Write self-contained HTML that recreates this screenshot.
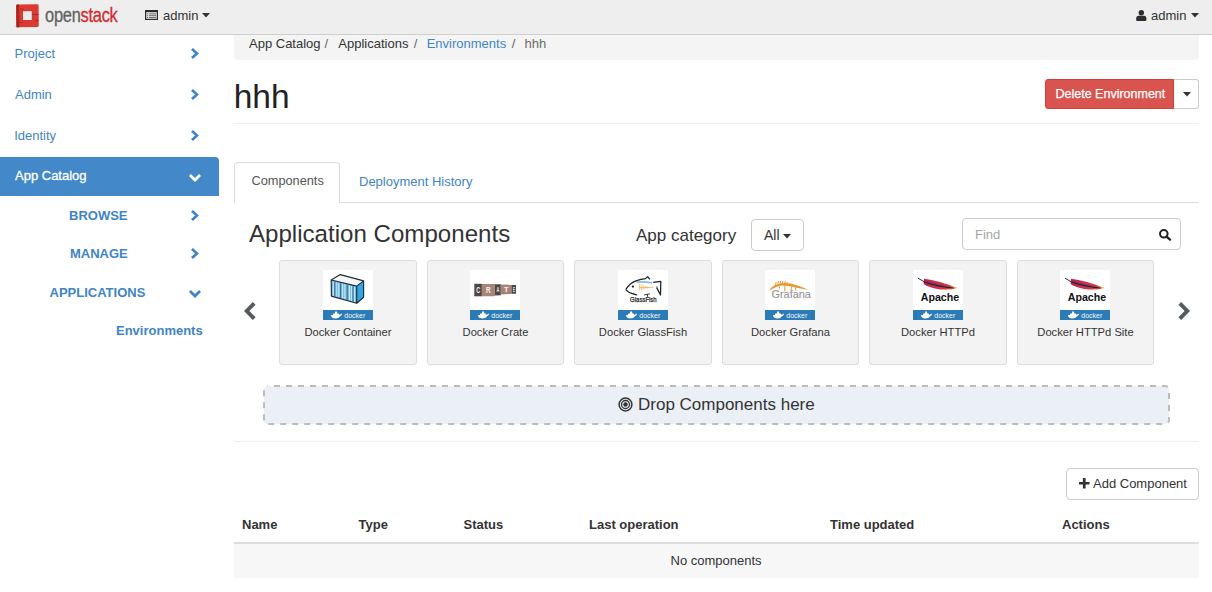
<!DOCTYPE html>
<html><head><meta charset="utf-8">
<style>
*{box-sizing:border-box;margin:0;padding:0}
html,body{width:1212px;height:592px;overflow:hidden;background:#fff;font-family:"Liberation Sans",sans-serif;color:#333;font-size:13px}
.a{position:absolute;white-space:nowrap;line-height:1}
#nav{position:absolute;left:0;top:0;width:1212px;height:35px;background:#eee;border-bottom:1px solid #cfcfcf}
.blue{color:#3f84c7}
.side{font-size:13px}
.b{font-weight:bold}
svg{position:absolute;overflow:visible}
</style></head><body>
<div id="nav"></div>
<!-- logo -->
<svg style="left:13px;top:3px" width="28" height="27" viewBox="0 0 28 27"><path d="M1.5 22.5 L4 25 L5 24 Z" fill="#9a9a9a" opacity="0.6"/><path d="M3.2 2.8 Q3.2 1.6 4.4 1.5 L24.6 1.2 Q25.6 1.3 25.6 2.4 L25.8 22.6 Q25.8 23.8 24.6 23.9 L4.6 24.3 Q3.4 24.3 3.4 23.2 Z" fill="#da3a31"/><path d="M3.2 2.8 Q3.2 1.6 4.4 1.5 L6 1.5 L6.4 24.3 L4.6 24.3 Q3.4 24.3 3.4 23.2 Z" fill="#a8251f"/><rect x="10" y="8.2" width="9.2" height="8.8" fill="#ececec"/><path d="M19.2 8.2 L19.2 17 M19.4 11.5 L25.6 11.5 M6.4 19.5 L10 19.5 M22 17.6 L25.6 17.6 M7 6 L11 6" stroke="#8f1f1a" stroke-width="0.8" opacity="0.8"/></svg>
<div class="a" style="left:45px;top:4px;font-size:21px;transform:scaleX(0.78);transform-origin:0 0;letter-spacing:-0.3px;-webkit-text-stroke:0.35px"><span style="color:#626262">open</span><span style="color:#d42a2f">stack</span></div>
<!-- project list icon -->
<svg style="left:145px;top:10px" width="13" height="10" viewBox="0 0 13 10"><rect x="0.6" y="0.6" width="11.8" height="8.8" fill="none" stroke="#2a2a2a" stroke-width="1.2"/><rect x="0" y="0" width="13" height="2.2" fill="#2a2a2a"/><rect x="1.8" y="3.4" width="1.4" height="1" fill="#666"/><rect x="1.8" y="5.2" width="1.4" height="1" fill="#666"/><rect x="1.8" y="7" width="1.4" height="1" fill="#666"/><rect x="4" y="3.4" width="7.2" height="1" fill="#666"/><rect x="4" y="5.2" width="7.2" height="1" fill="#666"/><rect x="4" y="7" width="7.2" height="1" fill="#666"/></svg>
<div class="a" style="left:163px;top:9px;font-size:13px;color:#333">admin</div>
<svg style="left:202px;top:13.4px" width="8" height="5" viewBox="0 0 8 5"><path d="M0 0 L8 0 L4 4.5 Z" fill="#333"/></svg>
<!-- user -->
<svg style="left:1136px;top:10px" width="11" height="11" viewBox="0 0 11 11"><circle cx="5.3" cy="2.7" r="2.7" fill="#2d2d2d"/><path d="M0.2 10 L0.2 8.4 Q0.2 5.8 2.6 5.8 L8 5.8 Q10.4 5.8 10.4 8.4 L10.4 10 Q10.4 11 9.4 11 L1.2 11 Q0.2 11 0.2 10 Z" fill="#2d2d2d"/></svg>
<div class="a" style="left:1151px;top:9px;font-size:13px;color:#333">admin</div>
<svg style="left:1191px;top:13.4px" width="8" height="5" viewBox="0 0 8 5"><path d="M0 0 L8 0 L4 4.5 Z" fill="#333"/></svg>

<!-- sidebar -->
<div class="a side blue" style="left:14.6px;top:47px">Project</div>
<div class="a side blue" style="left:15px;top:88px">Admin</div>
<div class="a side blue" style="left:14.2px;top:129px">Identity</div>
<div style="position:absolute;left:0;top:157px;width:219px;height:39px;background:#4388c9;border-top-right-radius:4px"></div>
<div class="a side" style="left:15px;top:169px;color:#fff;-webkit-text-stroke:0.3px #fff">App Catalog</div>
<div class="a side b blue" style="left:69px;top:208.6px">BROWSE</div>
<div class="a side b blue" style="left:70px;top:246.8px">MANAGE</div>
<div class="a side b blue" style="left:49.5px;top:286px">APPLICATIONS</div>
<div class="a side b blue" style="left:116px;top:324px">Environments</div>
<!-- chevrons -->
<svg style="left:191px;top:48px" width="8" height="11" viewBox="0 0 8 11"><path d="M1.9 0 L7.9 5.5 L1.9 11 L0 9.1 L4.1 5.5 L0 1.9 Z" fill="#3f84c7"/></svg>
<svg style="left:191px;top:89px" width="8" height="11" viewBox="0 0 8 11"><path d="M1.9 0 L7.9 5.5 L1.9 11 L0 9.1 L4.1 5.5 L0 1.9 Z" fill="#3f84c7"/></svg>
<svg style="left:191px;top:130px" width="8" height="11" viewBox="0 0 8 11"><path d="M1.9 0 L7.9 5.5 L1.9 11 L0 9.1 L4.1 5.5 L0 1.9 Z" fill="#3f84c7"/></svg>
<svg style="left:188.5px;top:173.5px" width="12" height="8" viewBox="0 0 12 8"><path d="M0 1.9 L1.9 0 L6 4.1 L10.1 0 L12 1.9 L6 7.9 Z" fill="#fff"/></svg>
<svg style="left:191px;top:210px" width="8" height="11" viewBox="0 0 8 11"><path d="M1.9 0 L7.9 5.5 L1.9 11 L0 9.1 L4.1 5.5 L0 1.9 Z" fill="#3f84c7"/></svg>
<svg style="left:191px;top:248px" width="8" height="11" viewBox="0 0 8 11"><path d="M1.9 0 L7.9 5.5 L1.9 11 L0 9.1 L4.1 5.5 L0 1.9 Z" fill="#3f84c7"/></svg>
<svg style="left:189px;top:290px" width="12" height="8" viewBox="0 0 12 8"><path d="M0 1.9 L1.9 0 L6 4.1 L10.1 0 L12 1.9 L6 7.9 Z" fill="#3f84c7"/></svg>

<!-- breadcrumb -->
<div style="position:absolute;left:234px;top:35px;width:965px;height:25px;background:#f4f4f4;border-radius:0 0 4px 4px"></div>
<div class="a" style="left:249px;top:36.6px">App Catalog</div><div class="a" style="left:324.5px;top:36.6px;color:#666">/</div><div class="a" style="left:338.3px;top:36.6px">Applications</div><div class="a" style="left:413.8px;top:36.6px;color:#666">/</div><div class="a blue" style="left:426.7px;top:36.6px">Environments</div><div class="a" style="left:511.7px;top:36.6px;color:#666">/</div><div class="a" style="left:524.5px;top:36.6px;color:#6a6a6a">hhh</div>

<!-- title -->
<div class="a" style="left:233.7px;top:79.6px;font-size:33.5px;color:#222">hhh</div>
<div style="position:absolute;left:234px;top:123px;width:965px;height:1px;background:#eee"></div>

<!-- delete button -->
<div style="position:absolute;left:1045px;top:79px;width:129px;height:30px;background:#d9534f;border:1px solid #d43f3a;border-radius:3px 0 0 3px"></div>
<div class="a" style="left:1055.5px;top:88px;font-size:12.5px;color:#fff;-webkit-text-stroke:0.25px #fff">Delete Environment</div>
<div style="position:absolute;left:1174px;top:79px;width:25px;height:30px;background:#fff;border:1px solid #ccc;border-left:none;border-radius:0 3px 3px 0"></div>
<svg style="left:1183px;top:92px" width="8" height="5" viewBox="0 0 8 5"><path d="M0 0 L8 0 L4 4.5 Z" fill="#333"/></svg>

<!-- tabs -->
<div style="position:absolute;left:234px;top:202px;width:965px;height:1px;background:#ddd"></div>
<div style="position:absolute;left:234px;top:162px;width:106px;height:41px;background:#fff;border:1px solid #ddd;border-bottom:none;border-radius:4px 4px 0 0"></div>
<div class="a" style="left:251.5px;top:175.2px;font-size:12.75px;color:#555">Components</div>
<div class="a blue" style="left:359px;top:175px;font-size:13px">Deployment History</div>

<!-- app components header -->
<div class="a" style="left:249px;top:222px;font-size:24.1px;color:#333">Application Components</div>
<div class="a" style="left:636px;top:227px;font-size:17px;color:#333">App category</div>
<div style="position:absolute;left:751px;top:219px;width:53px;height:32px;border:1px solid #ccc;border-radius:4px;background:#fff"></div>
<div class="a" style="left:764px;top:227.5px;font-size:14px;color:#333">All</div>
<svg style="left:783px;top:234px" width="8" height="5" viewBox="0 0 8 5"><path d="M0 0 L8 0 L4 4.5 Z" fill="#333"/></svg>
<div style="position:absolute;left:962px;top:218px;width:219px;height:32px;border:1px solid #ccc;border-radius:4px;background:#fff"></div>
<div class="a" style="left:975px;top:228px;font-size:13px;color:#a4a4a4">Find</div>
<svg style="left:1159px;top:229px" width="12" height="11" viewBox="0 0 12 11"><circle cx="4.8" cy="4.8" r="3.8" fill="none" stroke="#222" stroke-width="2"/><path d="M7.6 7.6 L11 10.6" stroke="#222" stroke-width="2.4" stroke-linecap="round"/></svg>

<!-- carousel -->
<svg style="left:244px;top:302px" width="12" height="18" viewBox="0 0 12 18"><path d="M8.8 0 L11.6 2.8 L5.4 9 L11.6 15.2 L8.8 18 L0 9 Z" fill="#565b60"/></svg>
<svg style="left:1178px;top:302px" width="12" height="18" viewBox="0 0 12 18"><path d="M3.2 0 L0.4 2.8 L6.6 9 L0.4 15.2 L3.2 18 L12 9 Z" fill="#565b60"/></svg>

<div id="cards"></div>
<div style="position:absolute;left:279px;top:260px;width:138px;height:105px;background:#f3f3f3;border:1px solid #ddd;border-radius:3px"></div>
<svg style="left:323px;top:270px" width="50" height="50" viewBox="0 0 50 50"><rect width="50" height="50" fill="#fff"/><path d="M8.2 10 L17.3 4.6 L40.6 10.9 L33.7 16.1 Z" fill="#f6f7f8"/><path d="M8.2 10 L33.7 16.1 L33.7 33.3 L8.4 26.1 Z" fill="#74bde3"/><path d="M10.3 11.50 L10.3 25.89" stroke="#d6effa" stroke-width="0.9"/><path d="M13.2 12.20 L13.2 26.71" stroke="#d6effa" stroke-width="0.9"/><path d="M15.8 12.82 L15.8 27.45" stroke="#d6effa" stroke-width="0.9"/><path d="M19.6 13.73 L19.6 28.52" stroke="#d6effa" stroke-width="0.9"/><path d="M21.9 14.28 L21.9 29.17" stroke="#d6effa" stroke-width="0.9"/><path d="M26.5 15.38 L26.5 30.47" stroke="#d6effa" stroke-width="0.9"/><path d="M28.6 15.88 L28.6 31.06" stroke="#d6effa" stroke-width="0.9"/><path d="M31.4 16.55 L31.4 31.85" stroke="#d6effa" stroke-width="0.9"/><path d="M11.8 11.86 L11.8 26.32" stroke="#2a4c6e" stroke-width="0.8"/><path d="M17.6 13.25 L17.6 27.95" stroke="#2a4c6e" stroke-width="0.8"/><path d="M24.2 14.83 L24.2 29.82" stroke="#2a4c6e" stroke-width="0.8"/><path d="M30.0 16.21 L30.0 31.46" stroke="#2a4c6e" stroke-width="0.8"/><path d="M33.7 16.1 L40.6 10.9 L40.6 27.3 L33.7 33.3 Z" fill="#33a6e0"/><path d="M8.2 10 L17.3 4.6 L40.6 10.9 L40.6 27.3 L33.7 33.3 L8.4 26.1 Z M8.2 10 L33.7 16.1 L40.6 10.9 M33.7 16.1 L33.7 33.3" fill="none" stroke="#1e2b3c" stroke-width="1.15" stroke-linejoin="round"/><rect x="0" y="40" width="50" height="10" fill="#2b7cb6"/><path d="M7.8 45.2 L10 45 L10.3 43.4 L11.9 43.4 L12.3 41.4 L13.9 41.4 L14.4 43.4 L15.6 43.6 L16.4 44.8 Q17.6 44.6 18.2 43.4 L19 43.9 Q18.6 45.4 17.4 46.1 Q15.6 48.6 12.2 48.6 Q8.8 48.4 7.8 45.2 Z" fill="#fff"/><text x="21.3" y="47.7" font-family="Liberation Sans" font-size="7.8" fill="#f4f8fb" textLength="21" lengthAdjust="spacingAndGlyphs">docker</text></svg>
<div class="a" style="left:278.0px;width:140px;text-align:center;top:327px;font-size:11.2px;color:#333">Docker Container</div>
<div style="position:absolute;left:427px;top:260px;width:137px;height:105px;background:#f3f3f3;border:1px solid #ddd;border-radius:3px"></div>
<svg style="left:470px;top:270px" width="50" height="50" viewBox="0 0 50 50"><rect width="50" height="50" fill="#fff"/><path d="M4.3 13.8 L11.9 13.8 L11.9 26.3 L4.3 26.3 Z" fill="#4e4644"/><path d="M11.9 13.9 L24.8 14.1 L24.8 26.2 L11.9 26.3 Z" fill="#a88478"/><path d="M24.8 14.2 L30.8 14.3 L30.8 25.2 L24.8 25.6 Z" fill="#4e4644"/><path d="M30.8 14.6 L41.5 14.7 L41.5 23.9 L30.8 24.4 Z" fill="#a88478"/><path d="M41.5 14.9 L46 15 L46 23.7 L41.5 23.8 Z" fill="#4e4644"/><text x="8.2" y="22.6" font-family="Liberation Sans" font-weight="bold" font-size="8.4" fill="#f4f4f4" text-anchor="middle" textLength="4" lengthAdjust="spacingAndGlyphs">C</text><text x="18.3" y="22.6" font-family="Liberation Sans" font-weight="bold" font-size="8.4" fill="#f4f4f4" text-anchor="middle" textLength="4.6" lengthAdjust="spacingAndGlyphs">R</text><text x="28" y="22.2" font-family="Liberation Sans" font-weight="bold" font-size="7.6" fill="#e8e8e8" text-anchor="middle" textLength="2.8" lengthAdjust="spacingAndGlyphs">A</text><text x="36.2" y="22" font-family="Liberation Sans" font-weight="bold" font-size="7.4" fill="#f4f4f4" text-anchor="middle" textLength="4.5" lengthAdjust="spacingAndGlyphs">T</text><text x="44" y="21.8" font-family="Liberation Sans" font-weight="bold" font-size="6.8" fill="#f0e8e0" text-anchor="middle" textLength="2" lengthAdjust="spacingAndGlyphs">E</text><rect x="0" y="40" width="50" height="10" fill="#2b7cb6"/><path d="M7.8 45.2 L10 45 L10.3 43.4 L11.9 43.4 L12.3 41.4 L13.9 41.4 L14.4 43.4 L15.6 43.6 L16.4 44.8 Q17.6 44.6 18.2 43.4 L19 43.9 Q18.6 45.4 17.4 46.1 Q15.6 48.6 12.2 48.6 Q8.8 48.4 7.8 45.2 Z" fill="#fff"/><text x="21.3" y="47.7" font-family="Liberation Sans" font-size="7.8" fill="#f4f8fb" textLength="21" lengthAdjust="spacingAndGlyphs">docker</text></svg>
<div class="a" style="left:425.5px;width:140px;text-align:center;top:327px;font-size:11.2px;color:#333">Docker Crate</div>
<div style="position:absolute;left:574px;top:260px;width:138px;height:105px;background:#f3f3f3;border:1px solid #ddd;border-radius:3px"></div>
<svg style="left:618px;top:270px" width="50" height="50" viewBox="0 0 50 50"><rect width="50" height="50" fill="#fff"/><path d="M18.6 12.3 Q26 11.2 34.1 12.9" fill="none" stroke="#7cc0ee" stroke-width="1.8"/><path d="M15.2 22.3 Q16 23.5 17.2 23.8" fill="none" stroke="#6ab8ea" stroke-width="1"/><path d="M38.7 16.2 L39.2 18.2" stroke="#5fb0e8" stroke-width="1.2"/><path d="M7.9 19.4 Q12 12.6 18 10.8 Q23 9.2 27.5 8.6 L29.6 6.6 L31.9 9.4" fill="none" stroke="#1e1e1e" stroke-width="1.25" stroke-linejoin="round"/><path d="M7.7 19.6 Q11 23.2 15.8 24.2 Q17.6 24.8 19.2 25" fill="none" stroke="#1e1e1e" stroke-width="1.25"/><path d="M35.2 12.4 L42.8 11.4 L42.5 25 L38.7 17.6" fill="none" stroke="#1e1e1e" stroke-width="1.25" stroke-linejoin="round"/><circle cx="14.9" cy="16.6" r="1.15" fill="#1e1e1e"/><path d="M21 17.6 L35.6 17.4 M21.4 14 L21.4 20.4 M23.2 14.6 L23.2 20 M25.1 15 L25.1 19.6 M27 15.6 L27 19.2 M29 16.2 L29 18.6" stroke="#f3ad55" stroke-width="0.75" fill="none"/><path d="M26.1 25 L31.9 23.8 M29.2 24.2 L29.8 26.9" stroke="#1e1e1e" stroke-width="0.9" fill="none"/><text x="25.4" y="32.3" font-family="Liberation Sans" font-size="6.9" fill="#2a2a2a" stroke="#2a2a2a" stroke-width="0.25" text-anchor="middle" textLength="26.6" lengthAdjust="spacingAndGlyphs">GlassFish</text><rect x="0" y="40" width="50" height="10" fill="#2b7cb6"/><path d="M7.8 45.2 L10 45 L10.3 43.4 L11.9 43.4 L12.3 41.4 L13.9 41.4 L14.4 43.4 L15.6 43.6 L16.4 44.8 Q17.6 44.6 18.2 43.4 L19 43.9 Q18.6 45.4 17.4 46.1 Q15.6 48.6 12.2 48.6 Q8.8 48.4 7.8 45.2 Z" fill="#fff"/><text x="21.3" y="47.7" font-family="Liberation Sans" font-size="7.8" fill="#f4f8fb" textLength="21" lengthAdjust="spacingAndGlyphs">docker</text></svg>
<div class="a" style="left:573.0px;width:140px;text-align:center;top:327px;font-size:11.2px;color:#333">Docker GlassFish</div>
<div style="position:absolute;left:722px;top:260px;width:137px;height:105px;background:#f3f3f3;border:1px solid #ddd;border-radius:3px"></div>
<svg style="left:765px;top:270px" width="50" height="50" viewBox="0 0 50 50"><rect width="50" height="50" fill="#fff"/><path d="M4.2 21 Q6.8 16.2 11 14.8 Q15 13.2 19.8 13 Q25.5 13 30.8 15 Q37 16.8 43.2 19.8 Q37 18.8 30.8 17.4 Q25 16 19.8 15.6 Q14 15.6 11 16.9 Q7.6 18.4 4.2 21 Z" fill="#e8962e"/><path d="M10.6 15.2 L11.2 11.8 M12.8 14.4 L13.6 11.2 M15 13.9 L15.6 10.8 M17.2 13.6 L18 10.8 M19.4 13.4 L20.4 11.2 M21.8 13.5 L22.4 11.8 M19.8 14.6 L19.8 21.4 M30.8 15.8 L30.6 20.6 M26.4 16.6 L26.2 20.2 M14 16 L14.6 18.6" stroke="#e8962e" stroke-width="1" fill="none"/><text x="26.2" y="28.1" font-family="Liberation Sans" font-size="10.6" fill="#9a9a9a" stroke="#8a8a8a" stroke-width="0.15" text-anchor="middle" textLength="39.4" lengthAdjust="spacingAndGlyphs">Grafana</text><rect x="0" y="40" width="50" height="10" fill="#2b7cb6"/><path d="M7.8 45.2 L10 45 L10.3 43.4 L11.9 43.4 L12.3 41.4 L13.9 41.4 L14.4 43.4 L15.6 43.6 L16.4 44.8 Q17.6 44.6 18.2 43.4 L19 43.9 Q18.6 45.4 17.4 46.1 Q15.6 48.6 12.2 48.6 Q8.8 48.4 7.8 45.2 Z" fill="#fff"/><text x="21.3" y="47.7" font-family="Liberation Sans" font-size="7.8" fill="#f4f8fb" textLength="21" lengthAdjust="spacingAndGlyphs">docker</text></svg>
<div class="a" style="left:720.5px;width:140px;text-align:center;top:327px;font-size:11.2px;color:#333">Docker Grafana</div>
<div style="position:absolute;left:869px;top:260px;width:138px;height:105px;background:#f3f3f3;border:1px solid #ddd;border-radius:3px"></div>
<svg style="left:913px;top:270px" width="50" height="50" viewBox="0 0 50 50"><rect width="50" height="50" fill="#fff"/><defs><linearGradient id="fg4" x1="0" y1="0" x2="1" y2="0"><stop offset="0" stop-color="#b8204a"/><stop offset="0.3" stop-color="#d22e3e"/><stop offset="0.75" stop-color="#dc3a3a"/><stop offset="0.88" stop-color="#ee8a3c"/><stop offset="1" stop-color="#f6b84c"/></linearGradient></defs><path d="M11 8.8 Q18 9.6 27 12.1 Q37 15 44.6 18 Q36 20.4 24.3 19 Q15 17 10.6 13.9 Z" fill="url(#fg4)"/><path d="M12 10.6 Q22 13.2 30 15.1 Q36 16.6 40.5 17.7 Q32 17.8 24 16.8 Q16 15.2 12 10.6 Z" fill="#5e3a8c" opacity="0.7"/><path d="M4.9 8.1 L11.9 12.2 Q24 16.4 40.5 18.1" fill="none" stroke="#1a1a1a" stroke-width="0.9"/><text x="27" y="30.6" font-family="Liberation Sans" font-weight="bold" font-size="10.2" fill="#111" text-anchor="middle" textLength="38.4" lengthAdjust="spacingAndGlyphs">Apache</text><rect x="0" y="40" width="50" height="10" fill="#2b7cb6"/><path d="M7.8 45.2 L10 45 L10.3 43.4 L11.9 43.4 L12.3 41.4 L13.9 41.4 L14.4 43.4 L15.6 43.6 L16.4 44.8 Q17.6 44.6 18.2 43.4 L19 43.9 Q18.6 45.4 17.4 46.1 Q15.6 48.6 12.2 48.6 Q8.8 48.4 7.8 45.2 Z" fill="#fff"/><text x="21.3" y="47.7" font-family="Liberation Sans" font-size="7.8" fill="#f4f8fb" textLength="21" lengthAdjust="spacingAndGlyphs">docker</text></svg>
<div class="a" style="left:868.0px;width:140px;text-align:center;top:327px;font-size:11.2px;color:#333">Docker HTTPd</div>
<div style="position:absolute;left:1017px;top:260px;width:137px;height:105px;background:#f3f3f3;border:1px solid #ddd;border-radius:3px"></div>
<svg style="left:1060px;top:270px" width="50" height="50" viewBox="0 0 50 50"><rect width="50" height="50" fill="#fff"/><defs><linearGradient id="fg5" x1="0" y1="0" x2="1" y2="0"><stop offset="0" stop-color="#b8204a"/><stop offset="0.3" stop-color="#d22e3e"/><stop offset="0.75" stop-color="#dc3a3a"/><stop offset="0.88" stop-color="#ee8a3c"/><stop offset="1" stop-color="#f6b84c"/></linearGradient></defs><path d="M11 8.8 Q18 9.6 27 12.1 Q37 15 44.6 18 Q36 20.4 24.3 19 Q15 17 10.6 13.9 Z" fill="url(#fg5)"/><path d="M12 10.6 Q22 13.2 30 15.1 Q36 16.6 40.5 17.7 Q32 17.8 24 16.8 Q16 15.2 12 10.6 Z" fill="#5e3a8c" opacity="0.7"/><path d="M4.9 8.1 L11.9 12.2 Q24 16.4 40.5 18.1" fill="none" stroke="#1a1a1a" stroke-width="0.9"/><text x="27" y="30.6" font-family="Liberation Sans" font-weight="bold" font-size="10.2" fill="#111" text-anchor="middle" textLength="38.4" lengthAdjust="spacingAndGlyphs">Apache</text><rect x="0" y="40" width="50" height="10" fill="#2b7cb6"/><path d="M7.8 45.2 L10 45 L10.3 43.4 L11.9 43.4 L12.3 41.4 L13.9 41.4 L14.4 43.4 L15.6 43.6 L16.4 44.8 Q17.6 44.6 18.2 43.4 L19 43.9 Q18.6 45.4 17.4 46.1 Q15.6 48.6 12.2 48.6 Q8.8 48.4 7.8 45.2 Z" fill="#fff"/><text x="21.3" y="47.7" font-family="Liberation Sans" font-size="7.8" fill="#f4f8fb" textLength="21" lengthAdjust="spacingAndGlyphs">docker</text></svg>
<div class="a" style="left:1015.5px;width:140px;text-align:center;top:327px;font-size:11.2px;color:#333">Docker HTTPd Site</div>
<!-- /cards -->

<!-- drop zone -->
<svg style="left:263px;top:385px" width="907" height="40" viewBox="0 0 907 40"><rect x="1" y="1" width="905" height="38" rx="4" ry="4" fill="#ebf0f6" stroke="#bcbcbc" stroke-width="2" stroke-dasharray="6 6" stroke-dashoffset="-6"/></svg>
<svg style="left:618px;top:397px" width="15" height="15" viewBox="0 0 15 15"><circle cx="7.5" cy="7.5" r="6.4" fill="none" stroke="#333" stroke-width="1.5"/><circle cx="7.5" cy="7.5" r="4" fill="none" stroke="#333" stroke-width="1.3"/><circle cx="7.5" cy="7.5" r="2.2" fill="#333"/></svg>
<div class="a" style="left:638px;top:395.6px;font-size:17px;color:#333">Drop Components here</div>
<div style="position:absolute;left:234px;top:441px;width:965px;height:1px;background:#eee"></div>

<!-- add component -->
<div style="position:absolute;left:1066px;top:468px;width:133px;height:32px;border:1px solid #ccc;border-radius:4px;background:#fff"></div>
<svg style="left:1078.5px;top:477.5px" width="10.5" height="10.5" viewBox="0 0 10 10"><path d="M5 0 L5 10 M0 5 L10 5" stroke="#333" stroke-width="2.6"/></svg>
<div class="a" style="left:1093px;top:477px;font-size:13px;color:#333">Add Component</div>

<!-- table -->
<div class="a b" style="left:242px;top:518px">Name</div>
<div class="a b" style="left:358.5px;top:518px">Type</div>
<div class="a b" style="left:463.5px;top:518px">Status</div>
<div class="a b" style="left:589px;top:518px">Last operation</div>
<div class="a b" style="left:830px;top:518px">Time updated</div>
<div class="a b" style="left:1062px;top:518px">Actions</div>
<div style="position:absolute;left:234px;top:542px;width:965px;height:2px;background:#ddd"></div>
<div style="position:absolute;left:234px;top:544px;width:965px;height:34px;background:#f7f7f7"></div>
<div class="a" style="left:670.5px;top:554px">No components</div>
</body></html>
